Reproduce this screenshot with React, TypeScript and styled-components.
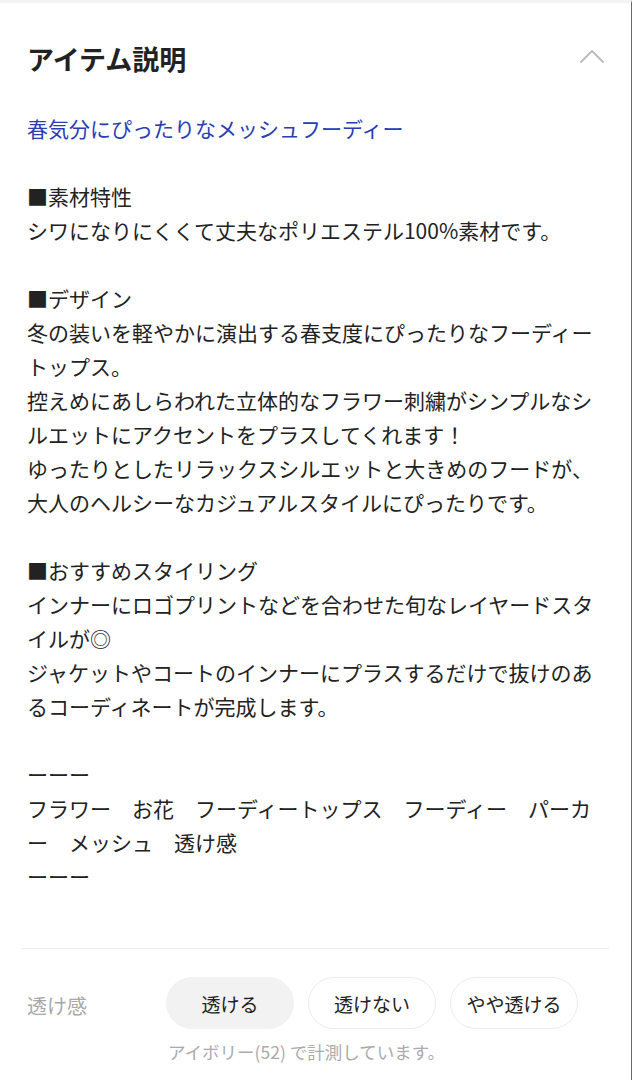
import React from "react";
import styled, { createGlobalStyle } from "styled-components";

const Global = createGlobalStyle`
  html, body { margin: 0; padding: 0; background: #fff; }
  body { font-family: "Noto Sans CJK JP", "Noto Sans", sans-serif; color: #222; }
`;

const Page = styled.div`
  width: 632px;
  min-height: 1080px;
  box-sizing: border-box;
  border-top: 3px solid #f3f3f3;
  border-right: 1px solid #6a6a6a;
  padding: 38px 27px 0 27px;
`;

const Header = styled.div`
  display: flex;
  align-items: center;
  justify-content: space-between;
  height: 36px;
`;

const Title = styled.h2`
  margin: 0;
  font-size: 27px;
  font-weight: 700;
  line-height: 36px;
  color: #222;
`;

const Chevron = styled.svg`
  width: 24px;
  height: 14px;
  margin-top: -6px;
`;

const Description = styled.div`
  margin-top: 34px;
  font-size: 21px;
  line-height: 34px;
  white-space: pre-wrap;
  line-break: strict;
  color: #222;
`;

const Lead = styled.span`
  color: #2a3db5;
`;

const Divider = styled.hr`
  margin: 55px -5px 0 -5px;
  border: none;
  border-top: 1px solid #eeeeee;
`;

const SpecRow = styled.div`
  display: flex;
  align-items: center;
  margin-top: 28px;
`;

const SpecLabel = styled.div`
  width: 139px;
  font-size: 20px;
  color: #a8a8a8;
  padding-top: 4px;
`;

const Chips = styled.div`
  display: flex;
  gap: 14px;
`;

const Chip = styled.div<{ $active?: boolean }>`
  width: 128px;
  height: 52px;
  box-sizing: border-box;
  border-radius: 26px;
  border: 1px solid ${(p) => (p.$active ? "#f2f2f2" : "#ececec")};
  background: ${(p) => (p.$active ? "#f2f2f2" : "#fff")};
  display: flex;
  align-items: center;
  justify-content: center;
  font-size: 19px;
  color: #222;
`;

const Caption = styled.div`
  margin: 11px 0 0 141px;
  font-size: 17.5px;
  color: #ababab;
  line-height: 24px;
`;

const body = `

■素材特性
シワになりにくくて丈夫なポリエステル100%素材です。

■デザイン
冬の装いを軽やかに演出する春支度にぴったりなフーディートップス。
控えめにあしらわれた立体的なフラワー刺繍がシンプルなシルエットにアクセントをプラスしてくれます！
ゆったりとしたリラックスシルエットと大きめのフードが、
大人のヘルシーなカジュアルスタイルにぴったりです。

■おすすめスタイリング
インナーにロゴプリントなどを合わせた旬なレイヤードスタイルが◎
ジャケットやコートのインナーにプラスするだけで抜けのあるコーディネートが完成します。

ーーー
フラワー　お花　フーディートップス　フーディー　パーカー　メッシュ　透け感
ーーー`;

export default function App() {
  return (
    <>
      <Global />
      <Page>
        <Header>
          <Title>アイテム説明</Title>
          <Chevron viewBox="0 0 24 14" fill="none">
            <path d="M1 13 L12 2 L23 13" stroke="#bdbdbd" strokeWidth="2" strokeLinecap="round" strokeLinejoin="round" />
          </Chevron>
        </Header>
        <Description>
          <Lead>春気分にぴったりなメッシュフーディー</Lead>
          {body}
        </Description>
        <Divider />
        <SpecRow>
          <SpecLabel>透け感</SpecLabel>
          <Chips>
            <Chip $active>透ける</Chip>
            <Chip>透けない</Chip>
            <Chip>やや透ける</Chip>
          </Chips>
        </SpecRow>
        <Caption>アイボリー(52) で計測しています。</Caption>
      </Page>
    </>
  );
}
